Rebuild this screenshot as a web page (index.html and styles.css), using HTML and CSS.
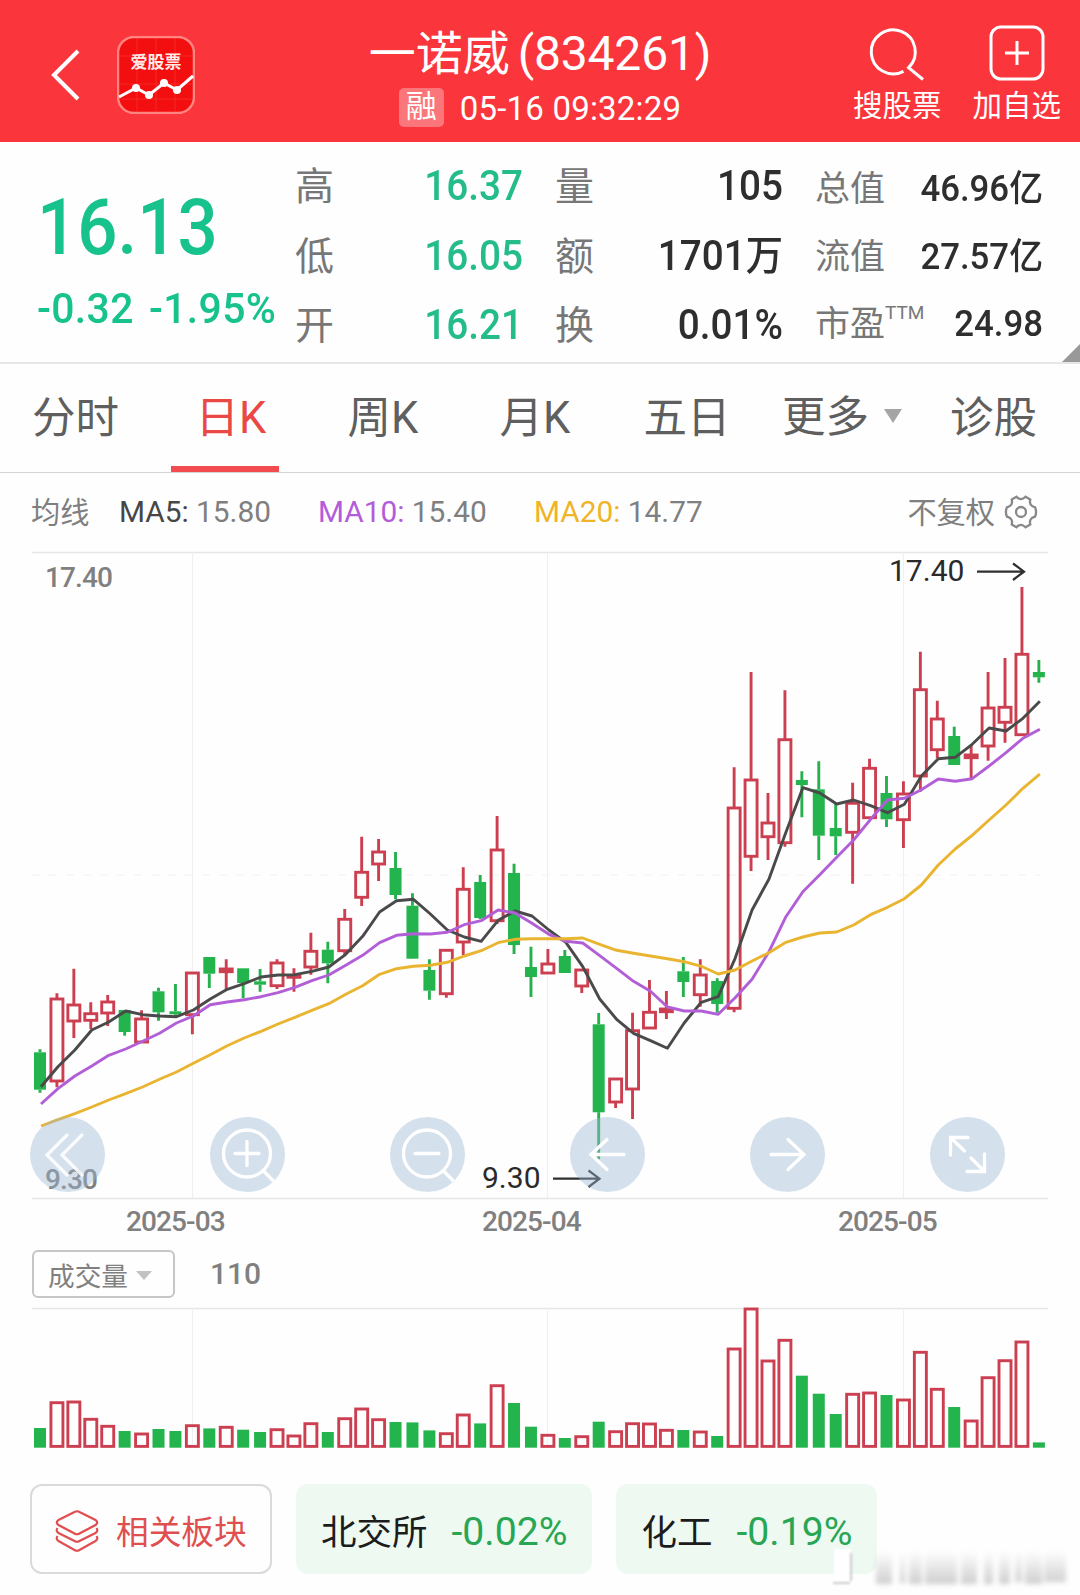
FILE: index.html
```html
<!DOCTYPE html>
<html lang="zh-CN">
<head>
  <meta charset="utf-8">
  <meta name="viewport" content="width=device-width,initial-scale=1.0">
  <title>一诺威(834261)</title>
  <link rel="stylesheet" href="styles.css">
</head>
<body>
  <header class="topbar">
    <div class="top-left">
      <svg class="back" width="30" height="54" viewBox="0 0 30 54"><path d="M27 3L3 27L27 51"/></svg>
      <svg class="logo" width="78" height="78" viewBox="0 0 78 78">
        <rect class="logo-bg" x="1" y="1" width="76" height="76" rx="16"/>
        <path class="logo-grid" d="M20 2V76M39 2V76M58 2V76M2 20H76M2 48H76M2 63H76"/>
        <text x="39" y="32" text-anchor="middle">爱股票</text>
        <path class="logo-line" d="M2 61L19 52L32 59L47 47L60 54L76 40"/>
        <circle cx="19" cy="52" r="4"/><circle cx="32" cy="59" r="4"/><circle cx="47" cy="47" r="4"/><circle cx="60" cy="54" r="4"/>
      </svg>
    </div>
    <div class="top-title">
      <h1>一诺威<span>(834261)</span></h1>
      <p><span class="tag">融</span><span class="time">05-16 09:32:29</span></p>
    </div>
    <div class="top-right">
      <div class="action">
        <svg width="56" height="56" viewBox="0 0 56 56"><path d="M34.5 46.3A22 22 0 1 1 39.6 42.6L54 54.5M39.6 42.6L42 40"/></svg>
        <span>搜股票</span>
      </div>
      <div class="action">
        <svg width="56" height="56" viewBox="0 0 56 56"><rect x="2" y="2" width="52" height="52" rx="10"/><path d="M28 16V40M16 28H40"/></svg>
        <span>加自选</span>
      </div>
    </div>
  </header>

  <section class="quote">
    <div class="price">
      <div class="last">16.13</div>
      <div class="change"><span>-0.32</span><span>-1.95%</span></div>
    </div>
    <dl class="stats down">
      <dt>高</dt><dd>16.37</dd>
      <dt>低</dt><dd>16.05</dd>
      <dt>开</dt><dd>16.21</dd>
    </dl>
    <dl class="stats">
      <dt>量</dt><dd>105</dd>
      <dt>额</dt><dd>1701<i>万</i></dd>
      <dt>换</dt><dd>0.01%</dd>
    </dl>
    <dl class="stats small">
      <dt>总值</dt><dd>46.96<i>亿</i></dd>
      <dt>流值</dt><dd>27.57<i>亿</i></dd>
      <dt>市盈<sup>TTM</sup></dt><dd>24.98</dd>
    </dl>
    <span class="corner"></span>
  </section>

  <nav class="tabs">
    <a class="first-tab">分时</a>
    <a class="on">日K</a>
    <a>周K</a>
    <a>月K</a>
    <a>五日</a>
    <a class="more">更多<span class="caret"></span></a>
    <a class="last-tab">诊股</a>
  </nav>

  <div class="ma">
    <span class="ma-name">均线</span>
    <span class="ma5"><b>MA5:</b> 15.80</span>
    <span class="ma10"><b>MA10:</b> 15.40</span>
    <span class="ma20"><b>MA20:</b> 14.77</span>
    <span class="fq">不复权</span>
    <svg width="34" height="34" viewBox="0 0 34 34"><path d="M12.5 1.8Q17 6.4 21.5 1.8L26.3 4.5Q24.6 10.6 31 12.3Q33.2 17 31 21.7Q24.6 23.4 26.3 29.5L21.5 32.2Q17 27.6 12.5 32.2L7.7 29.5Q9.4 23.4 3 21.7Q.8 17 3 12.3Q9.4 10.6 7.7 4.5Z"/><circle cx="17" cy="17" r="5"/></svg>
  </div>

  <div class="chart">
    <svg id="kline" width="1080" height="695" viewBox="0 545 1080 695">
      <path class="frame" d="M32 552.5H1048M32 1198.5H1048"/>
      <path class="grid" d="M192.5 552V1198M547.5 552V1198M903.5 552V1198"/>
      <path class="dash" d="M32 875H1040"/>
      <g id="candles"></g>
      <g class="axis">
        <text x="45" y="587">17.40</text>
        <text x="45" y="1188.5">9.30</text>
        <text x="126" y="1231">2025-03</text>
        <text x="482" y="1231">2025-04</text>
        <text x="838" y="1231">2025-05</text>
      </g>
      <g class="mark">
        <text x="889" y="581">17.40</text>
        <path d="M977 571.7H1023M1013 563.5L1024 571.7L1013 580"/>
        <text x="482" y="1188">9.30</text>
        <path d="M553 1178.7H599M588.5 1170.5L599.5 1178.7L588.5 1187"/>
      </g>
    </svg>
    <div class="tools">
      <svg viewBox="0 0 75 75"><path d="M37 18L17 38L37 58M52 18L32 38L52 58"/></svg>
      <svg viewBox="0 0 75 75"><circle cx="37" cy="36.5" r="23.5"/><path d="M25 36.5H49M37 24.5V48.5M53 53.5L63 63.5"/></svg>
      <svg viewBox="0 0 75 75"><circle cx="37" cy="36.5" r="23.5"/><path d="M25 36.5H49M53 53.5L63 63.5"/></svg>
      <svg viewBox="0 0 75 75"><path d="M54 37.5H21M37 22.5L21 37.5L37 52.5"/></svg>
      <svg viewBox="0 0 75 75"><path d="M21 37.5H54M38 22.5L54 37.5L38 52.5"/></svg>
      <svg viewBox="0 0 75 75"><path d="M38 20.5H20.5V38M20.5 20.5L34.5 34M37 54.5H54.5V37M54.5 54.5L41 41"/></svg>
    </div>
  </div>

  <div class="vol-head">
    <span class="select">成交量<span class="caret"></span></span>
    <span class="vol-value">110</span>
  </div>
  <svg id="volume" width="1080" height="149" viewBox="0 0 1080 149">
    <path class="frame" d="M32 8.5H1048"/>
    <path class="grid" d="M192.5 8V147M547.5 8V147M903.5 8V147"/>
    <g id="bars"></g>
  </svg>

  <footer class="sectors">
    <div class="related">
      <svg width="44" height="44" viewBox="0 0 44 44"><path d="M19.5 3Q22 1.5 24.5 3L40.500 11Q44 13.5 40.5 16L24.5 24.5Q22 26 19.5 24.5L3.5 16Q0 13.5 3.5 11ZM2.5 19Q.5 22 3.5 24L19.5 32Q22 33.5 24.5 32L40.5 24Q43.5 22 41.5 19M2.5 27Q.5 30 3.5 32L19.5 41Q22 42.5 24.5 41L40.5 32Q43.5 30 41.5 27"/></svg>
      <span>相关板块</span>
    </div>
    <div class="sector"><span>北交所</span><b>-0.02%</b></div>
    <div class="sector"><span>化工</span><b>-0.19%</b></div>
    <svg class="smudge" width="248" height="48" viewBox="0 0 248 48">
      <defs><linearGradient id="fade" x1="0" y1="0" x2="0" y2="1"><stop offset="0" stop-color="#ccc" stop-opacity="0"/><stop offset="1" stop-color="#c4c4c4" stop-opacity=".85"/></linearGradient></defs>
      <rect class="white" x="4" y="4" width="17" height="34"/>
      <path class="edge" d="M3 38H20M21 8V36"/>
      <path class="blobs" d="M46 6h16v33h-16zM70 6h5v32h-5zM79 6h13v33h-13zM95 6h32v33h-32zM131 6h16v33h-16zM154 6h9v33h-9zM169 6h11v33h-11zM185 6h7v31h-7zM195 6h17v33h-17zM214 6h22v31h-22z"/>
    </svg>
  </footer>

  <script>
    // kind, high, body top, body bottom, low, volume height
    var days = [
      ['g',1049.3,1052.3,1089.7,1092.7,19.7], ['r',993.3,999,1081,1087.3,46.3], ['r',968.7,1005,1021,1038,47],
      ['r',1002.3,1013.7,1020.3,1029,29.7], ['r',995,1002,1013,1026,22.7], ['g',1010,1010,1032,1035.7,16.7],
      ['r',1010.3,1019,1042,1042,15], ['g',987.7,991.3,1012.3,1020.7,18.7], ['g',984,1011.3,1014.3,1018,16.7],
      ['r',973,973,1014.7,1034.3,23.3], ['g',957,957,973.7,988,19.3], ['r',959.3,969,971.7,989.3,21.7],
      ['g',968.3,968.3,983,998.3,18], ['g',969,981.3,984.7,991.7,15.7], ['r',959.3,963,985.7,989,19.3],
      ['r',968.3,976,977.3,991.7,13], ['r',932.7,951.3,967,974.7,25.3], ['g',941.7,949.7,963.3,983.3,15.7],
      ['r',909,919.3,950.7,955,30.3], ['r',836.7,872.3,897.3,906,40], ['r',839,852,864,881,29.3],
      ['g',852,868,895,899.3,25.7], ['g',893.3,905.7,958.7,959,25.3], ['g',959.3,970,990.7,999.7,17.3],
      ['r',950.3,950.3,993.7,997.7,15.3], ['r',867.3,889.3,942,955,34], ['g',875,882,918,919,24.3],
      ['r',816,850,920.7,924,63.3], ['g',863.7,873,945,954,44.7], ['g',946.7,967,977,997,21],
      ['r',949,964,973,973,13.7], ['g',950,956,973,973,9.7], ['r',970,970,986,993,12.3],
      ['g',1013,1024.3,1112.3,1159.3,26], ['r',1079,1079,1102,1108,17.3], ['r',1012.7,1030.7,1089,1119,25.3],
      ['r',980,1012.3,1028,1028,25], ['r',991,1009,1011.7,1019,18.7], ['g',957,971.3,982,997,17.7],
      ['r',959.3,975,994.7,1006.7,17], ['g',978.3,981,1004,1012.7,11.7], ['r',767.3,808,1008.3,1012.3,100],
      ['r',672,780,856.3,871,140], ['r',793,823,836.7,860,88], ['r',690.3,739.7,842.7,846.7,108.7],
      ['g',771.3,780,785,817.3,72], ['g',761.3,789.3,835.7,860,54], ['g',803.3,828,836.3,855,33.7],
      ['r',782.7,803.3,832.3,883.7,54.7], ['r',758.7,768.3,817.7,818,56], ['g',776,793,819.3,827,52.7],
      ['r',781.3,794,819.7,848,49], ['r',651.7,689.7,776,791.7,96.7], ['r',700.7,719,749.7,758.3,59.7],
      ['g',726.7,736,765,765,40.7], ['r',745,755,757.7,778.7,28], ['r',672,708,746,760.7,71.3],
      ['r',658,707.3,722.3,742.7,88.3], ['r',587,654.3,734.7,735,107], ['g',660,672,677.3,682.7,5.3]
    ];
    var averages = {
      ma5: [1086.7,1066.7,1050,1030,1022,1011,1014.7,1016,1016.7,1010,999,989.3,983.7,977,975,974.7,971.3,967,954.3,936.3,912,900.7,899.3,914,930,937,941.3,920.3,911,916,930,942.3,966.7,999,1019.3,1033.3,1040.7,1048.3,1022.7,1002.3,996.7,958.3,910,879,832.3,787.7,793,804,800,805.7,812.7,804.3,776,758.7,757.3,744.3,728,731,718.3,701.3],
      ma10: [1104,1088.7,1076,1066,1055.3,1049,1041.3,1033.3,1023,1016,1004.7,1002,999.7,996.7,992.7,987.3,980.7,975,965.3,955.3,942.7,935.3,933.7,934,932.3,924.7,920.7,910,913,923.3,934.3,941.3,943,955.7,968.3,981.3,991.3,1007,1011,1011,1014.3,997.7,979.3,951.7,916.7,891.7,874.7,857.3,840,819.3,800,798.3,789.7,779,781.3,778.7,766,752.7,738.3,729.3],
      ma20: [1126,1119.7,1113.7,1107,1100,1093.7,1087,1079.3,1072,1063.3,1054.7,1045.7,1038,1031.3,1024,1017.3,1010.3,1003.7,994.3,985.7,974.3,968.7,966.3,965.3,962.3,956,950.7,942.7,939.3,938.7,938.7,938.7,938,944.3,950.3,953.3,956,958.7,961.7,966.3,974,970,961,952.7,942.3,937,933,932,925,914.7,907.3,898.7,885,865,849,835.3,820,805,788.3,774]
    };
    var step = 16.93;
    var candles = '';
    var bars = '';
    days.forEach(function(d, i){
      var x = 40 + i * step;
      var left = x - 6;
      candles += '<g class="' + d[0] + '"><path d="M' + x + ' ' + d[1] + 'V' + d[2] + 'M' + x + ' ' + d[3] + 'V' + d[4] + '"/>'
        + '<rect x="' + left + '" y="' + d[2] + '" width="12" height="' + (d[3] - d[2]) + '"/></g>';
      var h = d[5];
      var y = 147.7 - h;
      if (d[0] == 'r'){
        y += 1.3;
        h -= 2.6;
      }
      bars += '<g class="' + d[0] + '"><rect x="' + left + '" y="' + y + '" width="12" height="' + h + '"/></g>';
    });
    Object.keys(averages).forEach(function(name){
      var points = averages[name].map(function(y, i){
        return (41 + i * step) + ',' + y;
      });
      candles += '<polyline class="line-' + name + '" points="' + points.join(' ') + '"/>';
    });
    document.getElementById('candles').innerHTML = candles;
    document.getElementById('bars').innerHTML = bars;
  </script>
</body>
</html>
```
FILE: styles.css
```css
* {
  box-sizing: border-box;
}
body {
  margin: 0;
  width: 1080px;
  height: 1595px;
  overflow: hidden;
  background: #fefefe;
  color: #2e2e2e;
  font-family: Roboto, "Noto Sans CJK SC", sans-serif;
}
svg {
  display: block;
  fill: none;
  flex: none;
}
h1, p, dl, dd {
  margin: 0;
}
b, i {
  font-weight: inherit;
  font-style: normal;
}

/* header */
.topbar {
  display: grid;
  grid-template-columns: 1fr auto 1fr;
  height: 142px;
  background: #fa363c;
  color: #fff;
}
.top-left {
  display: flex;
  align-items: center;
  gap: 36px;
  padding: 8px 0 0 51px;
}
.back {
  stroke: #fff;
  stroke-width: 4;
}
.logo-bg {
  fill: #f30f10;
  stroke: #ff8583;
  stroke-width: 2.5;
}
.logo-grid {
  stroke: #fb3a36;
  stroke-width: 1;
  opacity: .6;
}
.logo-line {
  stroke: #fff;
  stroke-width: 3;
}
.logo circle {
  fill: #fff;
}
.logo text {
  fill: #ffe9e6;
  font-size: 17px;
  font-weight: 700;
}
.top-title {
  text-align: center;
}
.top-title h1 {
  margin-top: 20px;
  font-size: 47px;
  font-weight: 400;
  line-height: 68px;
  white-space: nowrap;
}
.top-title h1 span {
  margin-left: 8px;
  font-size: 48px;
  letter-spacing: -.2px;
}
.top-title p {
  display: flex;
  justify-content: center;
  align-items: center;
  gap: 16px;
  margin-top: -2px;
}
.tag {
  width: 45px;
  height: 39px;
  border-radius: 5px;
  background: rgba(255, 255, 255, .32);
  font-size: 31px;
  line-height: 37px;
}
.time {
  font-size: 33px;
  line-height: 40px;
  letter-spacing: .2px;
  padding-top: 3px;
}
.top-right {
  display: flex;
  justify-content: flex-end;
  gap: 31px;
  padding: 25px 19px 0 0;
}
.action {
  display: flex;
  flex-direction: column;
  align-items: center;
  gap: 3px;
  font-size: 29.5px;
  line-height: 44px;
}
.action svg {
  stroke: #fff;
  stroke-width: 3;
}

/* quote */
.quote {
  position: relative;
  display: flex;
  gap: 32px;
  height: 222px;
  padding: 9px 37px 0 0;
  border-bottom: 2px solid #e6e6e6;
}
.price {
  width: 263px;
  padding-left: 37px;
  color: #17c28c;
  font-weight: 500;
  white-space: nowrap;
}
.last {
  margin-top: 32px;
  font-size: 77px;
  line-height: 90px;
  transform: scaleX(.92);
  transform-origin: left;
}
.change {
  display: flex;
  gap: 16px;
  margin-top: 10px;
  font-size: 43px;
  line-height: 50px;
  letter-spacing: .4px;
  transform: scaleX(.95);
  transform-origin: left;
}
.stats {
  display: grid;
  grid-template-columns: 39px 1fr;
  grid-auto-rows: 69.5px;
  width: 228px;
  font-size: 42.5px;
  line-height: 69px;
  white-space: nowrap;
}
.stats dt {
  padding-top: 2px;
  color: #777;
  font-size: 39px;
}
.stats dd {
  text-align: right;
  font-weight: 500;
  transform: scaleX(.91);
  transform-origin: right;
}
.stats i {
  font-size: 41px;
}
.stats.down dd {
  color: #25bc8c;
}
.stats.small {
  grid-template-columns: 70px 1fr;
  grid-auto-rows: 67.5px;
  padding-top: 3px;
  font-size: 37px;
}
.stats.small dt {
  padding-top: 1px;
  font-size: 35px;
}
.stats.small dd {
  transform: scaleX(.94);
}
.stats.small i {
  font-size: 36px;
}
.stats sup {
  font-size: 19px;
  line-height: 0;
  vertical-align: 17px;
}
.corner {
  position: absolute;
  right: 0;
  bottom: 0;
  border-left: 18px solid transparent;
  border-bottom: 18px solid #999;
}

/* tabs */
.tabs {
  display: grid;
  grid-template-columns: 155px 152px 152px 152px 152px 169px 1fr;
  height: 109px;
  border-bottom: 1px solid #d4d4d4;
  color: #5f5f5f;
  font-size: 43.5px;
  line-height: 110px;
  text-align: center;
}
.tabs a {
  height: 108px;
}
.tabs .first-tab {
  text-align: left;
  padding-left: 32px;
}
.tabs .on {
  width: 108px;
  margin-left: 16px;
  padding-left: 12px;
  border-bottom: 6px solid #f24b50;
  color: #ea4844;
}
.tabs .more {
  display: flex;
  align-items: center;
  gap: 15px;
  padding-left: 19px;
}
.tabs .more .caret {
  margin-bottom: 4px;
}
.tabs .last-tab {
  text-align: left;
  padding-left: 18px;
}
.caret {
  border: 9px solid transparent;
  border-top: 14px solid #a5a5a5;
  border-bottom: 0;
}

/* averages */
.ma {
  display: flex;
  align-items: center;
  height: 72px;
  padding: 5px 42px 0 31px;
  color: #7f7f7f;
  font-size: 29.8px;
  white-space: nowrap;
}
.ma-name, .ma .fq {
  padding-bottom: 3px;
  font-size: 29.2px;
}
.ma-name {
  width: 88px;
}
.ma5 {
  width: 199px;
}
.ma10 {
  width: 216px;
}
.ma5 b {
  color: #464646;
}
.ma10 b {
  color: #b35cd9;
}
.ma20 b {
  color: #efb428;
}
.ma .fq {
  margin: 0 9px 0 auto;
}
.ma svg {
  stroke: #888;
  stroke-width: 2.3;
}

/* charts */
.chart {
  position: relative;
  height: 695px;
}
.tools {
  position: absolute;
  top: 572px;
  left: 30px;
  display: flex;
  gap: 105px;
}
.tools svg {
  width: 75px;
  height: 75px;
  border-radius: 50%;
  background: rgba(155, 183, 211, .42);
  stroke: #fff;
  stroke-width: 3.3;
  stroke-linecap: round;
}
.tools svg:first-child {
  stroke: rgba(255, 255, 255, .85);
}
.frame {
  stroke: #e6e6e6;
  stroke-width: 1.5;
}
.grid {
  stroke: #f0f0f0;
}
.dash {
  stroke: #f2f2f2;
  stroke-dasharray: 8 9;
}
.r path, .r rect {
  stroke: #cc3f50;
  stroke-width: 2.9;
}
.g path {
  stroke: #26b14e;
  stroke-width: 2.9;
}
.g rect {
  fill: #24b44e;
}
polyline {
  stroke-width: 2.9;
  stroke-linejoin: round;
}
.line-ma5 {
  stroke: #4a4a4a;
}
.line-ma10 {
  stroke: #b25fd7;
}
.line-ma20 {
  stroke: #e9b42f;
}
.axis text {
  fill: #808080;
  font-size: 28px;
  font-weight: 500;
  letter-spacing: -.9px;
}
.mark text {
  fill: #2a2a2a;
  font-size: 30px;
}
.mark path {
  stroke: #2f2f2f;
  stroke-width: 2.2;
}

/* volume */
.vol-head {
  display: flex;
  align-items: center;
  height: 60px;
  padding: 9px 0 0 32px;
  gap: 35px;
}
.select {
  display: flex;
  align-items: center;
  gap: 8px;
  width: 143px;
  height: 48px;
  margin-top: -1px;
  padding-left: 14px;
  border: 2px solid #c6c6c6;
  border-radius: 6px;
  color: #808080;
  font-size: 26.7px;
}
.select .caret {
  border-width: 9px 8px 0;
  border-top-color: #c2c2c2;
  margin-top: 3px;
}
.vol-value {
  padding-bottom: 3px;
  color: #808080;
  font-size: 30px;
  font-weight: 500;
}

/* sectors */
.sectors {
  position: relative;
  display: flex;
  gap: 24px;
  padding: 35px 0 0 30px;
}
.related, .sector {
  display: flex;
  align-items: center;
  height: 90px;
  border-radius: 12px;
  white-space: nowrap;
}
.related {
  width: 242px;
  gap: 17px;
  padding-left: 23px;
  border: 2px solid #dadada;
  color: #e04f4f;
  font-size: 32.7px;
}
.related svg {
  margin-top: 4px;
  stroke: #e04f4f;
  stroke-width: 2.2;
}
.sector {
  gap: 24px;
  padding: 0 25px;
  background: #eef9f2;
  color: #1c1c1c;
  font-size: 35.5px;
}
.sector b {
  padding-top: 6px;
  color: #29a653;
  font-size: 39.2px;
}
.smudge {
  position: absolute;
  right: 2px;
  bottom: -19px;
}
.smudge .white {
  fill: #fff;
  filter: blur(1px);
}
.smudge .edge {
  stroke: #bbb;
  stroke-width: 1.5;
  filter: blur(1px);
}
.smudge .blobs {
  fill: url(#fade);
  filter: blur(2.6px);
}
```
